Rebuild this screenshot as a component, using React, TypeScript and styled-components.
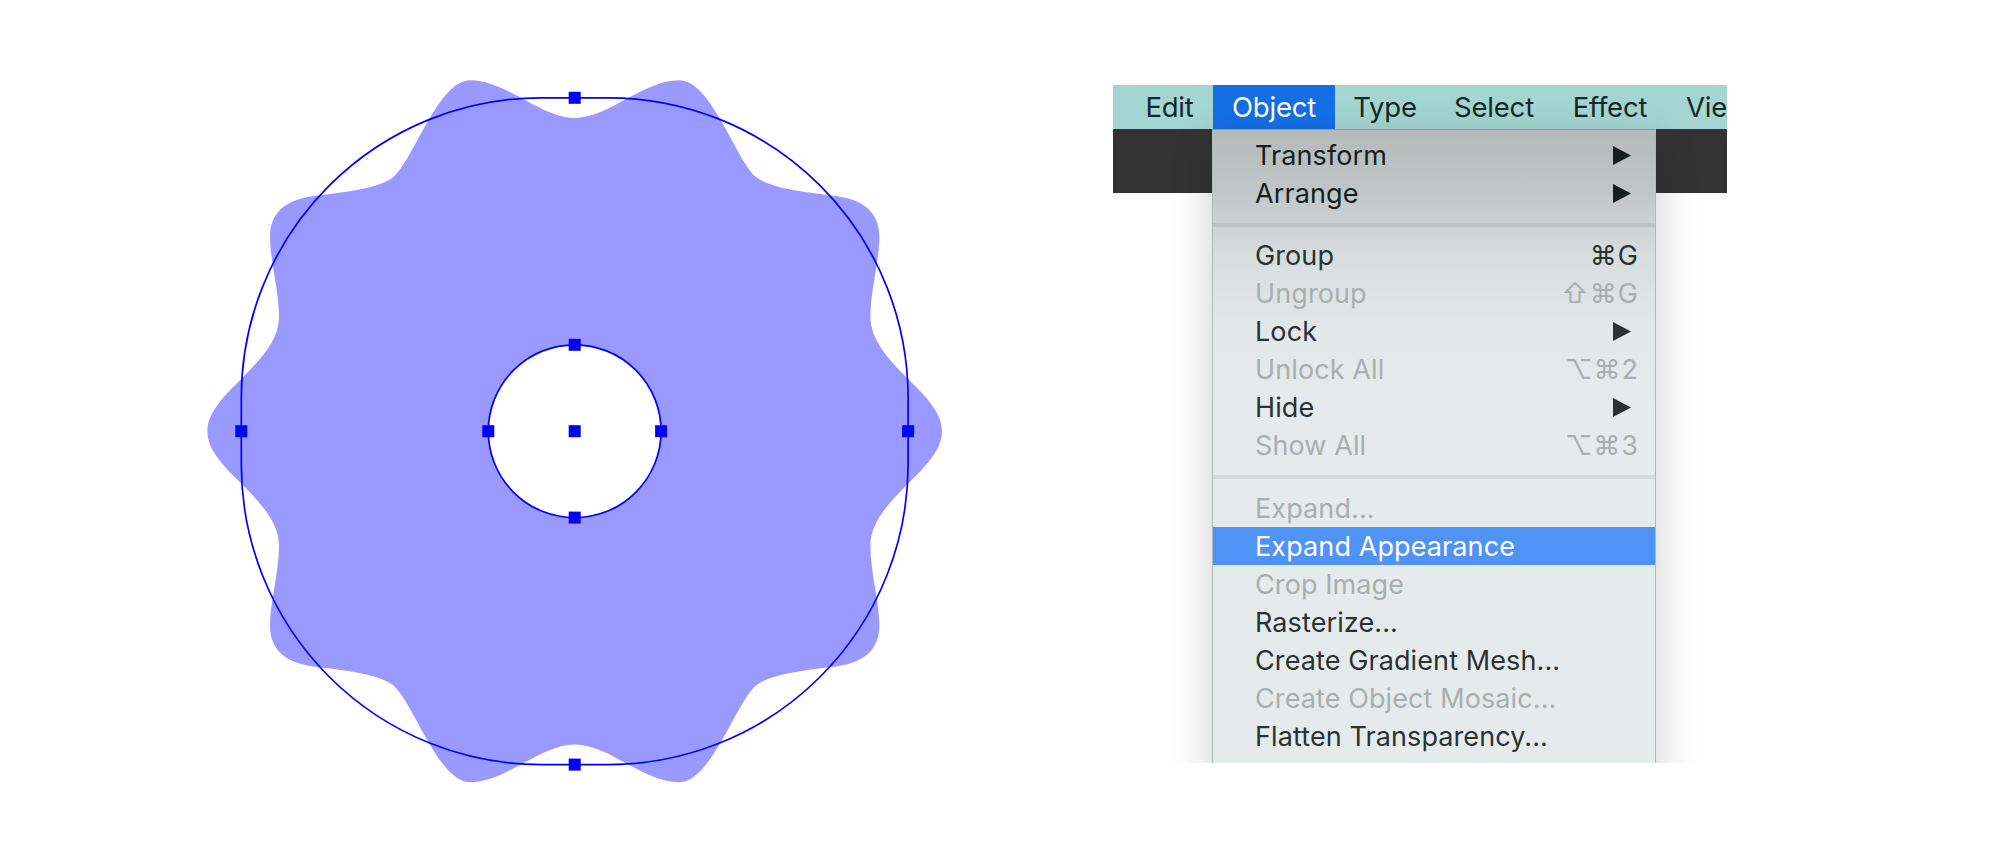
import React from "react";
import styled, { createGlobalStyle } from "styled-components";

const Global = createGlobalStyle`
  html, body { margin: 0; padding: 0; background: #fff; }
  body { font-family: Inter, "Liberation Sans", sans-serif; }
`;

const Page = styled.div`
  display: flex;
  align-items: flex-start;
  width: 2000px;
  height: 863px;
  overflow: hidden;
  background: #fff;
`;

const Canvas = styled.svg`
  flex: none;
  display: block;
  width: 1000px;
  height: 863px;
`;

const Clip = styled.div`
  position: relative;
  flex: none;
  box-sizing: border-box;
  width: 734px;
  height: 678px;
  margin: 85px 0 0 53px;
  padding: 0 60px;
  overflow: hidden;
`;

const MenuBar = styled.div`
  display: flex;
  height: 44px;
  background: #a4d5d1;
  overflow: hidden;
`;

const BarItem = styled.div<{ $active?: boolean; $w: number; $pl?: number }>`
  flex: none;
  box-sizing: border-box;
  width: ${(p) => p.$w}px;
  padding-left: ${(p) => p.$pl ?? 0}px;
  display: flex;
  align-items: center;
  justify-content: center;
  font-size: 27.5px;
  letter-spacing: -0.2px;
  white-space: nowrap;
  color: ${(p) => (p.$active ? "#fff" : "#0f2a28")};
  background: ${(p) => (p.$active ? "#146fe6" : "transparent")};
`;

const LastBarItem = styled(BarItem)`
  justify-content: flex-start;
`;

const DarkStrip = styled.div`
  height: 64px;
  background: #333;
`;

const Dropdown = styled.div`
  position: absolute;
  top: 44px;
  left: 159px;
  box-sizing: border-box;
  width: 444px;
  height: 660px;
  padding-top: 6px;
  border: 1px solid #b4b9b8;
  border-top-color: #8f9998;
  color: #2a3232;
  background: linear-gradient(180deg, #b4bab9 0px, #bfc6c5 60px, #d6dddc 125px, #e2e8e8 200px, #e5ebea 280px, #e5ebea 100%);
  box-shadow: 0 14px 40px rgba(0, 0, 0, 0.2);
`;

const TopGroup = styled.div`
  color: #141e1d;
`;

const Row = styled.div<{ $state?: "disabled" | "active" }>`
  display: flex;
  align-items: center;
  justify-content: space-between;
  box-sizing: border-box;
  height: 38px;
  padding: 1px 21px 0 42px;
  font-size: 27px;
  letter-spacing: 0.1px;
  color: ${(p) =>
    p.$state === "disabled" ? "#a9afae" : p.$state === "active" ? "#fff" : "inherit"};
  background: ${(p) => (p.$state === "active" ? "#5093f6" : "transparent")};
`;

const Shortcut = styled.span`
  margin-right: -5px;
  font-family: Inter, "DejaVu Sans", sans-serif;
  letter-spacing: 1px;
`;

const Arrow = styled.svg`
  flex: none;
  width: 18px;
  height: 19px;
  margin-right: 3px;
  fill: currentColor;
`;

const Separator = styled.div<{ $top: number; $bottom: number; $tone: string }>`
  height: 4px;
  margin: ${(p) => p.$top}px 0 ${(p) => p.$bottom}px;
  background: ${(p) => p.$tone};
`;

type Item = { label: string; state?: "disabled" | "active"; arrow?: boolean; keys?: string };

const groupA: Item[] = [
  { label: "Transform", arrow: true },
  { label: "Arrange", arrow: true },
];
const groupB: Item[] = [
  { label: "Group", keys: "⌘G" },
  { label: "Ungroup", state: "disabled", keys: "⇧⌘G" },
  { label: "Lock", arrow: true },
  { label: "Unlock All", state: "disabled", keys: "⌥⌘2" },
  { label: "Hide", arrow: true },
  { label: "Show All", state: "disabled", keys: "⌥⌘3" },
];
const groupC: Item[] = [
  { label: "Expand...", state: "disabled" },
  { label: "Expand Appearance", state: "active" },
  { label: "Crop Image", state: "disabled" },
  { label: "Rasterize..." },
  { label: "Create Gradient Mesh..." },
  { label: "Create Object Mosaic...", state: "disabled" },
  { label: "Flatten Transparency..." },
];

const MenuRows = ({ items }: { items: Item[] }) => (
  <>
    {items.map((it) => (
      <Row key={it.label} $state={it.state}>
        <span>{it.label}</span>
        {it.keys && <Shortcut>{it.keys}</Shortcut>}
        {it.arrow && (
          <Arrow viewBox="0 0 18 19">
            <path d="M0 0 L18 9.5 L0 19 Z" />
          </Arrow>
        )}
      </Row>
    ))}
  </>
);

const CX = 574.7;
const CY = 431.2;

// Top-left quarter of the petal outline, as offsets from the centre:
// each segment is [c1x, c1y, c2x, c2y, x, y], from top valley to left tip.
const START: [number, number] = [0, -313.3];
const QUARTER: number[][] = [
  [-34.7, -313.3, -68, -351, -104.7, -351],
  [-136.3, -351, -161.3, -271, -181.3, -254.3],
  [-194.7, -243.3, -228, -239.3, -254.7, -236],
  [-281.3, -233.7, -304.7, -224.3, -304.7, -194.3],
  [-304.7, -171, -295.7, -141, -295.7, -114.3],
  [-295.7, -91, -314.7, -71, -334.7, -51],
  [-352, -34, -367.3, -18, -367.3, 0],
];

function buildPetal(): string {
  const pts: [number, number][] = [START];
  QUARTER.forEach((s) => {
    pts.push([s[0], s[1]], [s[2], s[3]], [s[4], s[5]]);
  });
  const bottomLeft = pts.slice(0, -1).reverse().map(([x, y]) => [x, -y] as [number, number]);
  const left = [...pts, ...bottomLeft];
  const right = left.slice(0, -1).reverse().map(([x, y]) => [-x, y] as [number, number]);
  const all = [...left, ...right];
  let d = `M${(CX + all[0][0]).toFixed(1)} ${(CY + all[0][1]).toFixed(1)}`;
  for (let i = 1; i + 2 < all.length; i += 3) {
    const seg = [all[i], all[i + 1], all[i + 2]]
      .map(([x, y]) => `${(CX + x).toFixed(1)} ${(CY + y).toFixed(1)}`)
      .join(" ");
    d += `C${seg}`;
  }
  return d + "Z";
}

const OUTER = 333.4;
const INNER = 86.4;
const BLUE = "#0000ff";

const Handle = ({ x, y }: { x: number; y: number }) => (
  <rect x={x - 6} y={y - 6} width={12} height={12} fill={BLUE} />
);

export default function App() {
  return (
    <Page>
      <Global />
      <Canvas viewBox="0 0 1000 863">
        <path d={buildPetal()} fill="#9999ff" />
        <rect
          x={CX - OUTER}
          y={CY - OUTER}
          width={OUTER * 2}
          height={OUTER * 2}
          rx={300}
          ry={300}
          fill="none"
          stroke={BLUE}
          strokeWidth={1.7}
        />
        <circle cx={CX} cy={CY} r={INNER} fill="#fff" stroke={BLUE} strokeWidth={1.7} />
        <Handle x={CX} y={CY - OUTER} />
        <Handle x={CX} y={CY + OUTER} />
        <Handle x={CX - OUTER} y={CY} />
        <Handle x={CX + OUTER} y={CY} />
        <Handle x={CX} y={CY - INNER} />
        <Handle x={CX} y={CY + INNER} />
        <Handle x={CX - INNER} y={CY} />
        <Handle x={CX + INNER} y={CY} />
        <Handle x={CX} y={CY} />
      </Canvas>
      <Clip>
        <MenuBar>
          <BarItem $w={100} $pl={13}>Edit</BarItem>
          <BarItem $w={122} $active>Object</BarItem>
          <BarItem $w={100}>Type</BarItem>
          <BarItem $w={118}>Select</BarItem>
          <BarItem $w={114}>Effect</BarItem>
          <LastBarItem $w={60} $pl={19}>View</LastBarItem>
        </MenuBar>
        <DarkStrip />
        <Dropdown>
          <TopGroup>
            <MenuRows items={groupA} />
          </TopGroup>
          <Separator $top={11} $bottom={9} $tone="#bcc5c3" />
          <MenuRows items={groupB} />
          <Separator $top={11} $bottom={10} $tone="#d3dad9" />
          <MenuRows items={groupC} />
        </Dropdown>
      </Clip>
    </Page>
  );
}
